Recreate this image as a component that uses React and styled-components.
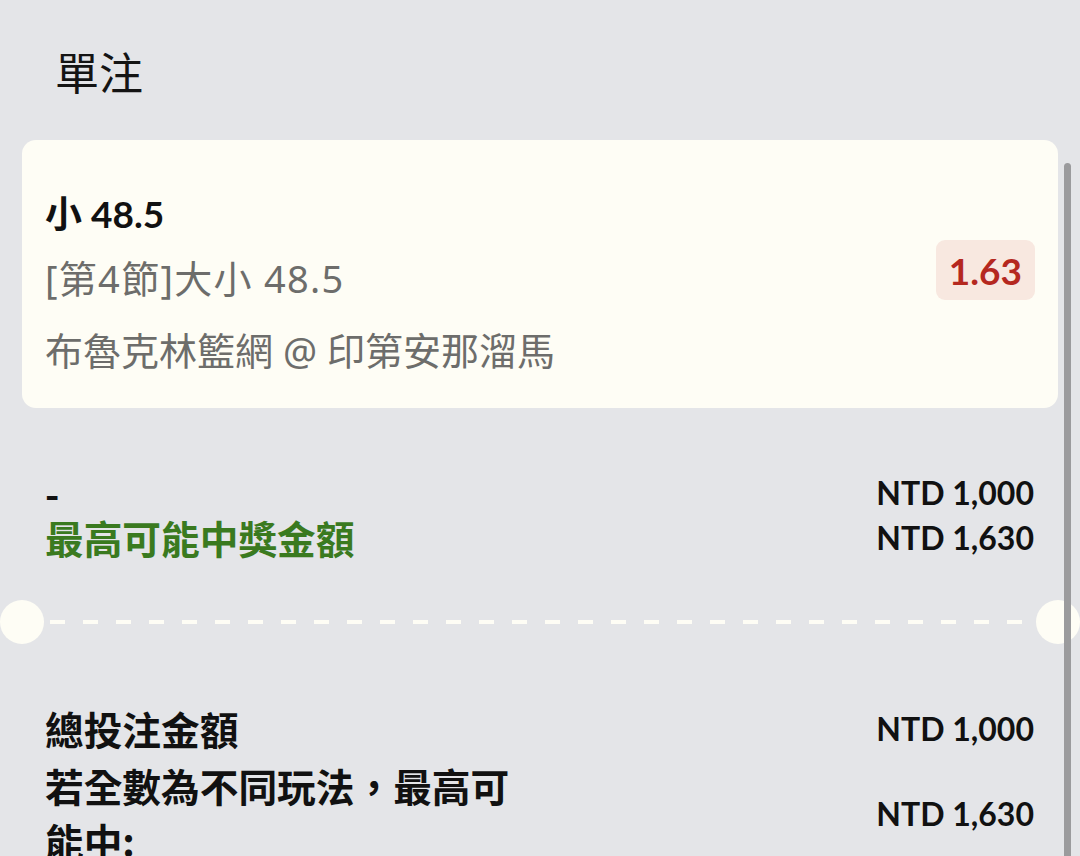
import React from "react";
import styled, { createGlobalStyle } from "styled-components";

const Global = createGlobalStyle`
  html, body {
    margin: 0;
    padding: 0;
    overflow: hidden;
    background: #e4e5e8;
  }
  * { box-sizing: border-box; }
`;

const FONT = `"Lato", "Noto Sans CJK TC", sans-serif`;
const CJK = `"Noto Sans CJK TC", sans-serif`;
const SUB = `"Noto Sans", "Noto Sans CJK TC", sans-serif`;

const Screen = styled.div`
  position: relative;
  width: 1080px;
  height: 856px;
  overflow: hidden;
  background: #e4e5e8;
  font-family: ${FONT};
  color: #111;
`;

const Header = styled.header`
  height: 140px;
  display: flex;
  align-items: center;
  padding: 2px 55px 0;
  font-family: ${CJK};
  font-size: 44px;
  font-weight: 400;
  color: #141414;
`;

const Card = styled.section`
  margin: 0 22px;
  height: 268px;
  background: #fefdf5;
  border-radius: 14px;
  padding: 48px 23px 32px;
  display: flex;
  justify-content: space-between;
  align-items: center;
`;

const CardText = styled.div`
  display: flex;
  flex-direction: column;
  align-self: stretch;
`;

const Selection = styled.div`
  font-family: ${FONT};
  font-size: 37px;
  font-weight: 700;
  line-height: 52px;
  color: #111;
`;

const SubLine = styled.div`
  font-family: ${SUB};
  font-size: 38px;
  font-weight: 400;
  line-height: 52px;
  color: #6d6d6b;
  margin-top: ${(p) => p.$gap}px;
  letter-spacing: ${(p) => p.$ls || 0}px;
`;

const Odds = styled.div`
  height: 60px;
  padding: 0 13px;
  margin-bottom: 24px;
  display: flex;
  align-items: center;
  border-radius: 9px;
  background: #f8e8e0;
  color: #b5281f;
  font-family: "Lato", sans-serif;
  font-weight: 700;
  font-size: 37px;
`;

const Summary = styled.section`
  padding: ${(p) => p.$top}px 46px 0 45px;
  display: flex;
  flex-direction: column;
  gap: ${(p) => p.$gap}px;
`;

const Row = styled.div`
  display: flex;
  justify-content: space-between;
  align-items: center;
  min-height: ${(p) => p.$h}px;
`;

const Label = styled.div`
  font-family: ${CJK};
  font-size: 38.7px;
  font-weight: 700;
  line-height: ${(p) => p.$lh}px;
  color: ${(p) => p.$color || "#111"};
  max-width: 490px;
`;

const Value = styled.div`
  font-family: "Lato", sans-serif;
  font-size: 32px;
  font-weight: 700;
  color: #111;
  white-space: nowrap;
`;

const Divider = styled.div`
  margin-top: 40px;
  height: 44px;
  display: flex;
  align-items: center;
`;

const Notch = styled.div`
  width: 44px;
  height: 44px;
  border-radius: 50%;
  background: #fefdf5;
  flex: none;
`;

const Dashes = styled.div`
  flex: 1;
  height: 4px;
  margin: 0 6px;
  background: repeating-linear-gradient(
    to right,
    #fefdf5 0 15px,
    transparent 15px 33px
  );
`;

const ScrollThumb = styled.div`
  position: absolute;
  top: 163px;
  right: 9px;
  width: 7px;
  bottom: -10px;
  border-radius: 4px;
  background: #9b9b9d;
`;

export default function App() {
  return (
    <>
      <Global />
      <Screen>
        <Header>單注</Header>
        <Card>
          <CardText>
            <Selection>小 48.5</Selection>
            <SubLine $gap={12} $ls={1.3}>[第4節]大小 48.5</SubLine>
            <SubLine $gap={20}>布魯克林籃網 @ 印第安那溜馬</SubLine>
          </CardText>
          <Odds>1.63</Odds>
        </Card>

        <Summary $top={62} $gap={0}>
          <Row $h={45}>
            <Label $lh={45}>-</Label>
            <Value>NTD 1,000</Value>
          </Row>
          <Row $h={45}>
            <Label $lh={45} $color="#3a7a1f">最高可能中獎金額</Label>
            <Value>NTD 1,630</Value>
          </Row>
        </Summary>

        <Divider>
          <Notch />
          <Dashes />
          <Notch />
        </Divider>

        <Summary $top={57} $gap={2}>
          <Row $h={55}>
            <Label $lh={55}>總投注金額</Label>
            <Value>NTD 1,000</Value>
          </Row>
          <Row $h={55}>
            <Label $lh={55}>若全數為不同玩法，最高可能中:</Label>
            <Value>NTD 1,630</Value>
          </Row>
        </Summary>

        <ScrollThumb />
      </Screen>
    </>
  );
}
